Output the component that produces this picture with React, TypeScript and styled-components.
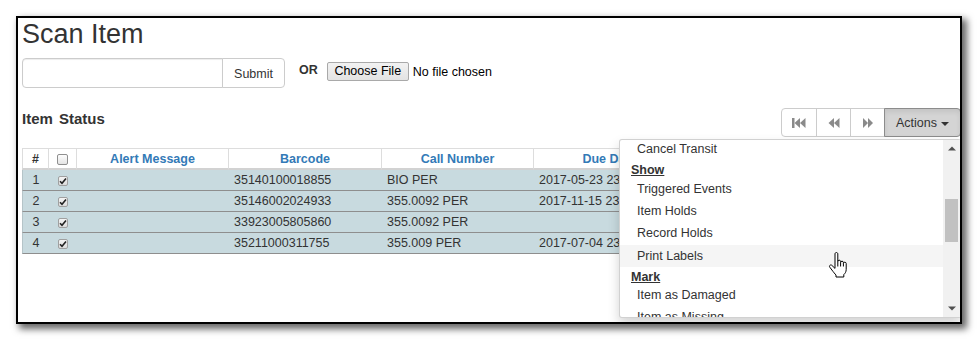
import React from "react";
import styled, { createGlobalStyle } from "styled-components";

const GlobalStyle = createGlobalStyle`
  html, body { margin: 0; padding: 0; background: #ffffff; }
  body {
    font-family: "Liberation Sans", Arial, Helvetica, sans-serif;
    font-size: 12.5px;
    color: #333333;
  }
  * { box-sizing: border-box; }
`;

const Stage = styled.div`
  width: 978px;
  height: 341px;
  padding: 16px 0 0 16px;
`;

const Frame = styled.div`
  width: 946px;
  height: 308px;
  border: 2px solid #000;
  background: #fff;
  overflow: hidden;
  box-shadow: 4px 4px 7px 1px rgba(0, 0, 0, 0.6);
`;

const Page = styled.div`
  position: relative;
  padding: 1px 0 0 4px;
  display: flex;
  flex-direction: column;
`;

const Title = styled.h1`
  margin: 0;
  font-size: 27px;
  line-height: 30px;
  font-weight: 400;
  color: #333;
`;

const ScanRow = styled.div`
  margin-top: 9px;
  display: flex;
  align-items: flex-start;
`;

const InputGroup = styled.div`
  display: flex;
`;

const TextInput = styled.input`
  width: 201px;
  height: 30px;
  border: 1px solid #ccc;
  border-radius: 4px 0 0 4px;
  box-shadow: inset 0 1px 1px rgba(0, 0, 0, 0.075);
  padding: 4px 8px;
  font: inherit;
  outline: none;
`;

const SubmitButton = styled.button`
  width: 63px;
  height: 30px;
  margin-left: -1px;
  border: 1px solid #ccc;
  border-radius: 0 4px 4px 0;
  background: #fff;
  color: #333;
  font: inherit;
  font-size: 12.5px;
  padding: 0;
  padding-top: 1px;
`;

const OrLabel = styled.span`
  margin: 3px 0 0 14px;
  line-height: 18px;
  font-weight: 700;
  color: #333;
`;

const FilePicker = styled.div`
  margin: 4px 0 0 9px;
  display: flex;
  align-items: center;
  gap: 4px;
  color: #000;
`;

const FileButton = styled.button`
  width: 82px;
  height: 19px;
  padding: 0;
  border: 1px solid #a9a9a9;
  border-radius: 2px;
  background: linear-gradient(#f2f2f2, #e3e3e3);
  color: #000;
  font: inherit;
  font-size: 12.5px;
  line-height: 17px;
`;

const StatusBar = styled.div`
  margin-top: 20px;
  display: flex;
  justify-content: space-between;
  align-items: flex-start;
`;

const SectionTitle = styled.h4`
  margin: 1px 0 0 0;
  font-size: 15px;
  line-height: 20px;
  font-weight: 700;
  word-spacing: 2px;
  color: #333;
`;

const Toolbar = styled.div`
  display: flex;
  margin-right: -1px;
`;

const PagerButton = styled.button<{ $first?: boolean }>`
  width: ${(p) => (p.$first ? 36 : 35)}px;
  height: 29px;
  margin-left: ${(p) => (p.$first ? 0 : -1)}px;
  border: 1px solid #ccc;
  border-radius: ${(p) => (p.$first ? "4px 0 0 4px" : "0")};
  background: #fff;
  display: flex;
  align-items: center;
  justify-content: center;
  padding: 0;
  color: #8a8a8a;
`;

const ActionsWrap = styled.div`
  position: relative;
  margin-left: -1px;
`;

const ActionsButton = styled.button`
  width: 77px;
  height: 29px;
  border: 1px solid #8c8c8c;
  border-radius: 0 4px 4px 0;
  background: #d4d4d4;
  box-shadow: inset 0 3px 5px rgba(0, 0, 0, 0.08);
  color: #333;
  font: inherit;
  font-size: 12.5px;
  display: flex;
  align-items: center;
  gap: 4px;
  padding: 0 0 0 11px;
`;

const Caret = styled.span`
  width: 0;
  height: 0;
  margin-top: 2px;
  border-top: 4px solid #333;
  border-left: 4px solid transparent;
  border-right: 4px solid transparent;
`;

const Menu = styled.div`
  position: absolute;
  right: 0;
  top: 31px;
  width: 342px;
  height: 179px;
  background: #fff;
  border: 1px solid rgba(0, 0, 0, 0.18);
  border-radius: 3px;
  box-shadow: 0 6px 12px rgba(0, 0, 0, 0.175);
  display: flex;
  z-index: 5;
`;

const MenuList = styled.div`
  flex: 1;
  overflow: hidden;
`;

const MenuScroll = styled.div<{ $offset: number }>`
  margin-top: ${(p) => -p.$offset}px;
  display: flex;
  flex-direction: column;
`;

const MenuItem = styled.div<{ $hover?: boolean }>`
  height: 22.33px;
  line-height: 22.33px;
  padding-left: 17px;
  color: #333;
  white-space: nowrap;
  background: ${(p) => (p.$hover ? "#f5f5f5" : "transparent")};
`;

const MenuHeader = styled.div`
  height: 17.2px;
  line-height: 20px;
  padding-left: 11px;
  font-weight: 700;
  text-decoration: underline;
  color: #333;
`;

const ScrollBar = styled.div`
  width: 17px;
  background: #f1f1f1;
  display: flex;
  flex-direction: column;
  align-items: center;
`;

const ScrollArrow = styled.div`
  height: 17px;
  width: 17px;
  display: flex;
  align-items: center;
  justify-content: center;
`;

const ScrollTrack = styled.div`
  flex: 1;
  width: 100%;
  display: flex;
  flex-direction: column;
  align-items: center;
`;

const ScrollThumb = styled.div`
  margin-top: 42px;
  width: 13px;
  height: 43px;
  background: #c1c1c1;
`;

const Cursor = styled.svg`
  position: absolute;
  left: 810px;
  top: 234px;
  z-index: 10;
`;

const Table = styled.table`
  margin-top: 11px;
  width: 938px;
  table-layout: fixed;
  border-collapse: separate;
  border-spacing: 0;
`;

const Th = styled.th<{ $plain?: boolean }>`
  height: 22px;
  padding: 0 5px;
  border-top: 1px solid #ddd;
  border-right: 1px solid #ddd;
  border-bottom: 2px solid #d2d2d2;
  font-weight: 700;
  text-align: center;
  color: ${(p) => (p.$plain ? "#333" : "#337ab7")};
  &:first-child { border-left: 1px solid #ddd; }
`;

const Td = styled.td<{ $center?: boolean }>`
  height: 21px;
  padding: 0 5px;
  background: #c8dadf;
  border-bottom: 1px solid #8e8e8e;
  text-align: ${(p) => (p.$center ? "center" : "left")};
  white-space: nowrap;
  overflow: hidden;
  &:first-child { border-left: 1px solid #b5c4c8; }
`;

const Check = styled.span<{ $checked?: boolean }>`
  display: inline-flex;
  align-items: center;
  justify-content: center;
  vertical-align: middle;
  width: ${(p) => (p.$checked ? 10 : 11)}px;
  height: ${(p) => (p.$checked ? 10 : 11)}px;
  border: 1px solid ${(p) => (p.$checked ? "#a0a0a0" : "#8f8f8f")};
  border-radius: 2px;
  background: ${(p) => (p.$checked ? "linear-gradient(#f4f4f4, #dcdcdc)" : "linear-gradient(#fdfdfd, #e4e4e4)")};
`;

const FastBackIcon = () => (
  <svg width="14" height="10" viewBox="0 0 14 10">
    <rect x="0" y="0" width="2.5" height="10" fill="currentColor" />
    <polygon points="8,0 2.5,5 8,10" fill="currentColor" />
    <polygon points="13.5,0 8,5 13.5,10" fill="currentColor" />
  </svg>
);

const BackIcon = () => (
  <svg width="12" height="10" viewBox="0 0 12 10">
    <polygon points="6,0 0.5,5 6,10" fill="currentColor" />
    <polygon points="11.5,0 6,5 11.5,10" fill="currentColor" />
  </svg>
);

const ForwardIcon = () => (
  <svg width="10" height="10" viewBox="0 0 10 10">
    <polygon points="0,0 5,5 0,10" fill="currentColor" />
    <polygon points="5,0 10,5 5,10" fill="currentColor" />
  </svg>
);

const CheckMark = () => (
  <svg width="8" height="8" viewBox="0 0 8 8">
    <path d="M1 4.2 L3 6.3 L7 1.5" stroke="#222" strokeWidth="1.6" fill="none" />
  </svg>
);

const Tri = ({ up }: { up?: boolean }) => (
  <svg width="8" height="5" viewBox="0 0 8 5">
    <polygon points={up ? "0,4.5 4,0.5 8,4.5" : "0,0.5 4,4.5 8,0.5"} fill="#505050" />
  </svg>
);

const HandCursor = () => (
  <Cursor width="20" height="26" viewBox="0 0 20 26">
    <path
      d="M7 2 C7 1.1 7.6 0.5 8.4 0.5 C9.2 0.5 9.8 1.1 9.8 2 V9.5 C9.8 8.7 10.4 8.2 11.2 8.2 C12 8.2 12.6 8.7 12.6 9.5 V10.5 C12.6 9.7 13.2 9.2 14 9.2 C14.8 9.2 15.4 9.7 15.4 10.5 V11.5 C15.4 10.7 16 10.2 16.8 10.2 C17.6 10.2 18.2 10.7 18.2 11.5 V17.5 C18.2 20 16.9 21.6 15.8 22.6 V25 H8 V23 C7 22 5.4 20 3.9 18 L1.8 15.2 C1.3 14.5 1.4 13.6 2.1 13.2 C2.7 12.8 3.5 12.9 4 13.5 L7 16.4 Z"
      fill="#fff"
      stroke="#000"
      strokeWidth="1"
      strokeLinejoin="round"
    />
    <path d="M9.8 9.5 V14.5 M12.6 10.5 V14.5 M15.4 11.5 V14.5" stroke="#000" strokeWidth="1" fill="none" />
  </Cursor>
);

type Row = { n: number; barcode: string; call: string; due: string };

const rows: Row[] = [
  { n: 1, barcode: "35140100018855", call: "BIO PER", due: "2017-05-23 23:59" },
  { n: 2, barcode: "35146002024933", call: "355.0092 PER", due: "2017-11-15 23:59" },
  { n: 3, barcode: "33923005805860", call: "355.0092 PER", due: "" },
  { n: 4, barcode: "35211000311755", call: "355.009 PER", due: "2017-07-04 23:59" },
];

export default function App() {
  return (
    <Stage>
      <GlobalStyle />
      <Frame>
        <Page>
          <Title>Scan Item</Title>
          <ScanRow>
            <InputGroup>
              <TextInput type="text" />
              <SubmitButton>Submit</SubmitButton>
            </InputGroup>
            <OrLabel>OR</OrLabel>
            <FilePicker>
              <FileButton>Choose File</FileButton>
              <span>No file chosen</span>
            </FilePicker>
          </ScanRow>
          <StatusBar>
            <SectionTitle>Item Status</SectionTitle>
            <Toolbar>
              <PagerButton $first>
                <FastBackIcon />
              </PagerButton>
              <PagerButton>
                <BackIcon />
              </PagerButton>
              <PagerButton>
                <ForwardIcon />
              </PagerButton>
              <ActionsWrap>
                <ActionsButton>
                  Actions <Caret />
                </ActionsButton>
                <Menu>
                  <MenuList>
                    <MenuScroll $offset={2}>
                      <MenuItem>Cancel Transit</MenuItem>
                      <MenuHeader>Show</MenuHeader>
                      <MenuItem>Triggered Events</MenuItem>
                      <MenuItem>Item Holds</MenuItem>
                      <MenuItem>Record Holds</MenuItem>
                      <MenuItem $hover>Print Labels</MenuItem>
                      <MenuHeader>Mark</MenuHeader>
                      <MenuItem>Item as Damaged</MenuItem>
                      <MenuItem>Item as Missing</MenuItem>
                    </MenuScroll>
                  </MenuList>
                  <ScrollBar>
                    <ScrollArrow>
                      <Tri up />
                    </ScrollArrow>
                    <ScrollTrack>
                      <ScrollThumb />
                    </ScrollTrack>
                    <ScrollArrow>
                      <Tri />
                    </ScrollArrow>
                  </ScrollBar>
                </Menu>
              </ActionsWrap>
            </Toolbar>
          </StatusBar>
          <Table>
            <colgroup>
              <col style={{ width: 27 }} />
              <col style={{ width: 28 }} />
              <col style={{ width: 152 }} />
              <col style={{ width: 153 }} />
              <col style={{ width: 152 }} />
              <col style={{ width: 152 }} />
              <col />
            </colgroup>
            <thead>
              <tr>
                <Th $plain>#</Th>
                <Th $plain>
                  <Check />
                </Th>
                <Th>Alert Message</Th>
                <Th>Barcode</Th>
                <Th>Call Number</Th>
                <Th>Due Date</Th>
                <Th>Location</Th>
              </tr>
            </thead>
            <tbody>
              {rows.map((r) => (
                <tr key={r.n}>
                  <Td $center>{r.n}</Td>
                  <Td $center>
                    <Check $checked>
                      <CheckMark />
                    </Check>
                  </Td>
                  <Td></Td>
                  <Td>{r.barcode}</Td>
                  <Td>{r.call}</Td>
                  <Td>{r.due}</Td>
                  <Td></Td>
                </tr>
              ))}
            </tbody>
          </Table>
          <HandCursor />
        </Page>
      </Frame>
    </Stage>
  );
}
